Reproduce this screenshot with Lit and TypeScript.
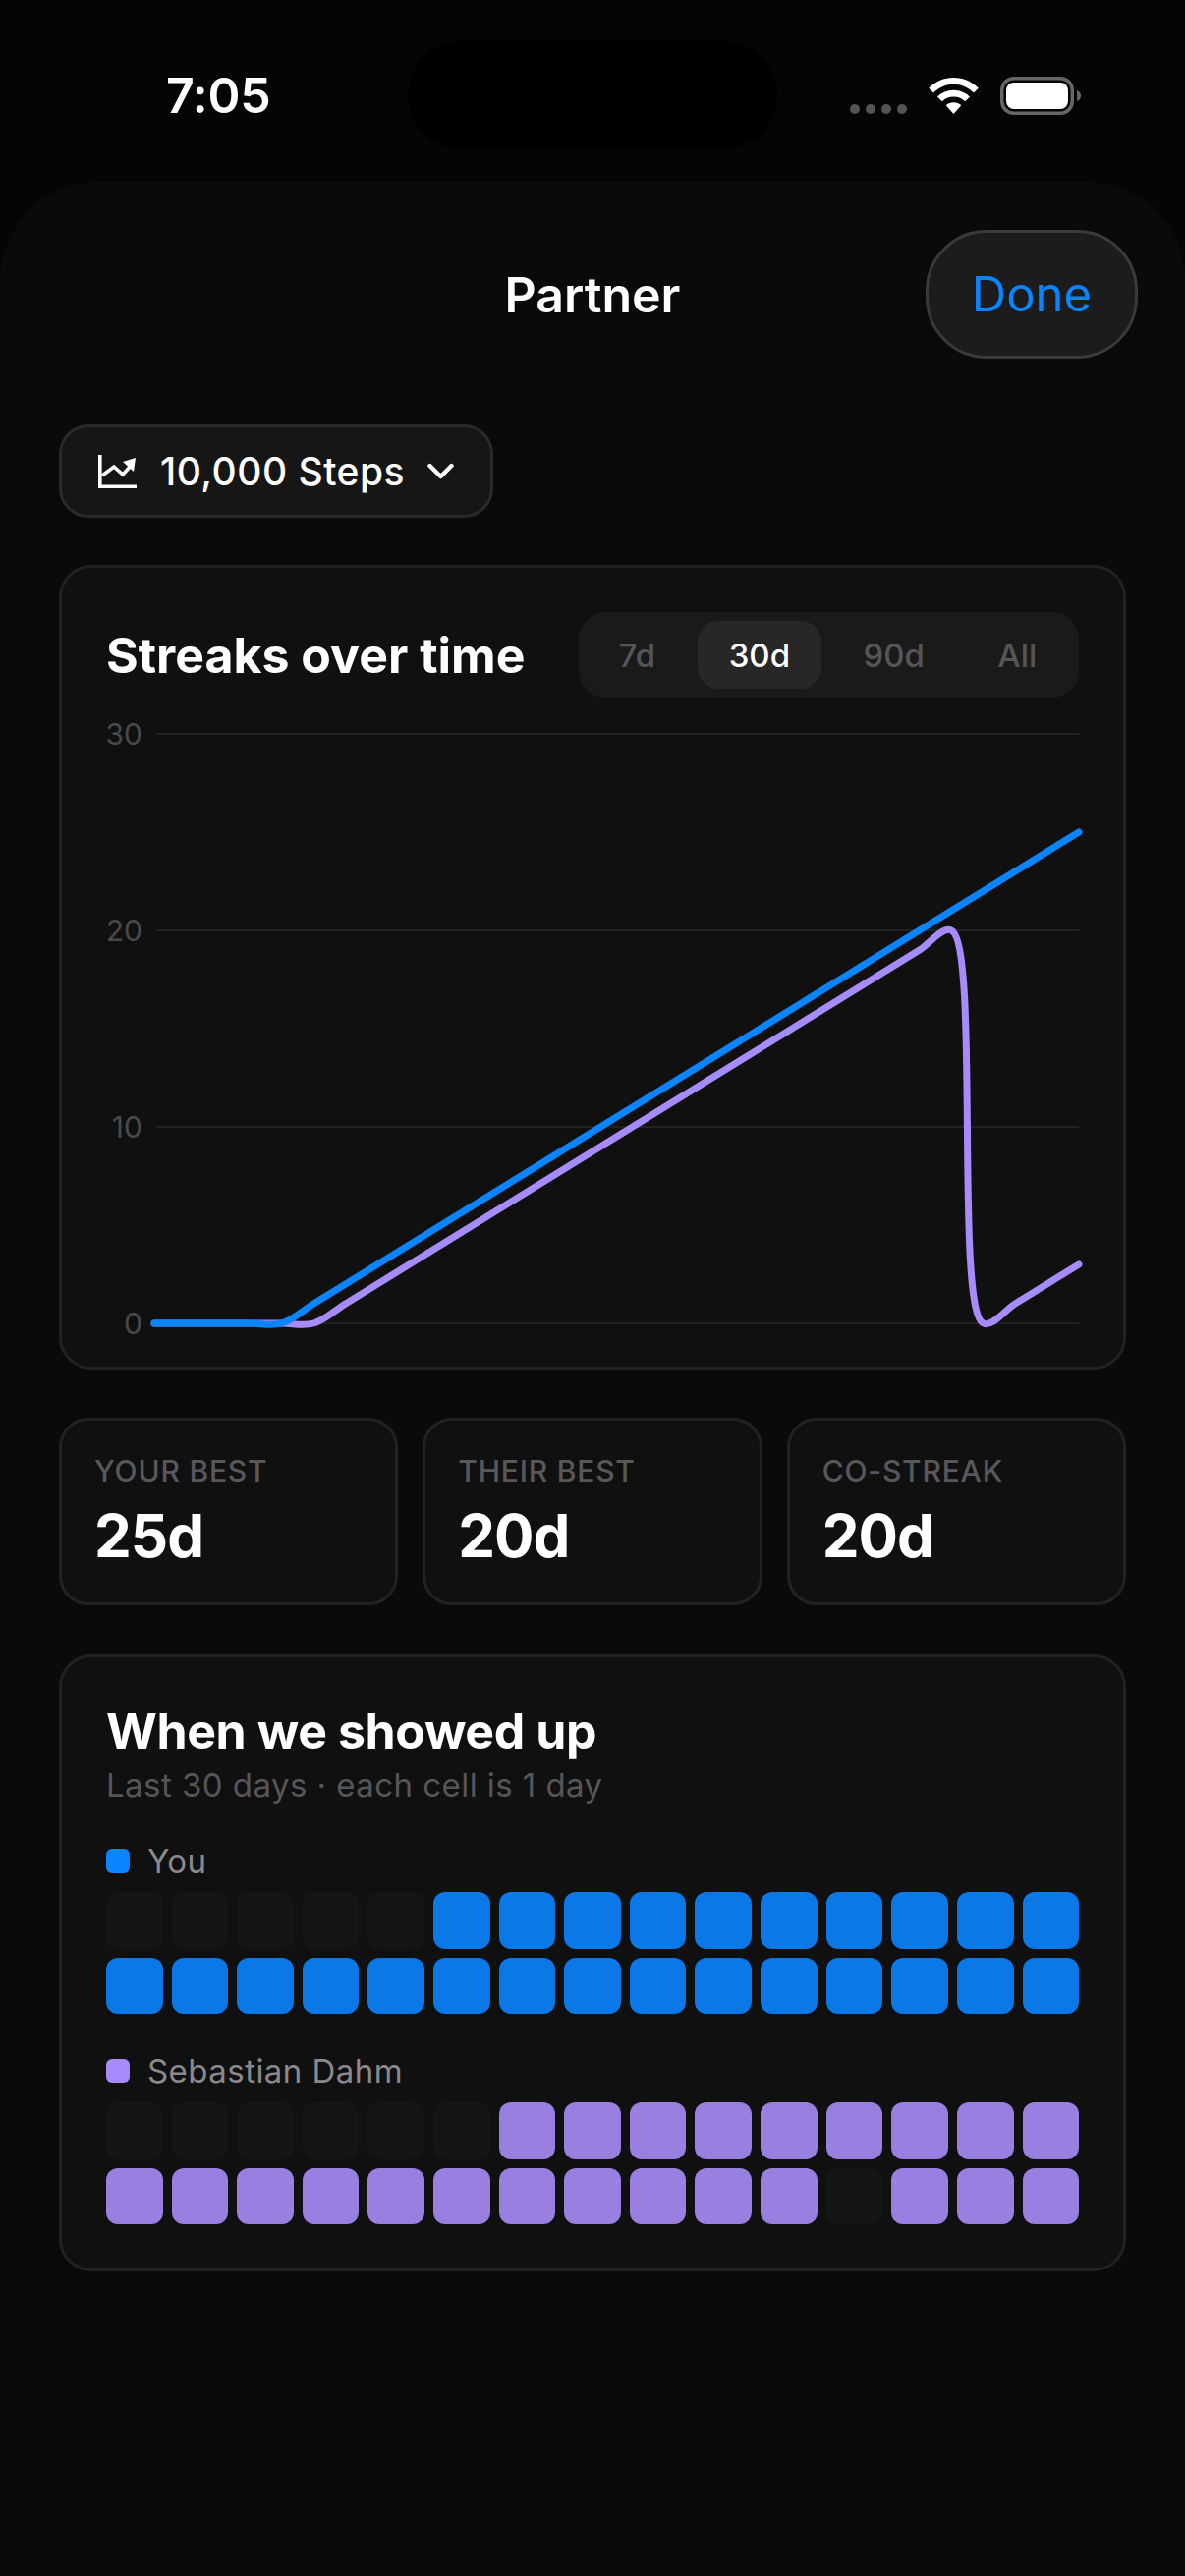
import { LitElement, html, css, svg } from "lit";
import { customElement } from "lit/decorators.js";

type Pt = [number, number];
const X0 = 49, STEP = 941 / 29, ZERO = 617, UNIT = 20;
const you = Array.from({ length: 30 }, (_, i) => Math.max(0, i - 4));
const them = Array.from({ length: 30 }, (_, i) =>
  i <= 5 ? 0 : i <= 25 ? i - 5 : i === 26 ? 0 : i - 26);

/* centripetal Catmull-Rom through the data points */
function curve(values: number[]): string {
  const p: Pt[] = values.map((v, i) => [X0 + i * STEP, ZERO - v * UNIT]);
  const dist = (a: Pt, b: Pt) => Math.hypot(a[0] - b[0], a[1] - b[1]);
  let d = `M${p[0][0]} ${p[0][1]}`;
  for (let i = 0; i < p.length - 1; i++) {
    const a = p[Math.max(i - 1, 0)], b = p[i], c = p[i + 1], e = p[Math.min(i + 2, p.length - 1)];
    const l01 = dist(a, b), l12 = dist(b, c), l23 = dist(c, e);
    const l01a = Math.sqrt(l01), l12a = Math.sqrt(l12), l23a = Math.sqrt(l23);
    let c1: Pt = [b[0], b[1]];
    let c2: Pt = [c[0], c[1]];
    if (l01a > 1e-6) {
      const A = 2 * l01 + 3 * l01a * l12a + l12, n = 3 * l01a * (l01a + l12a);
      c1 = [(b[0] * A - a[0] * l12 + c[0] * l01) / n, (b[1] * A - a[1] * l12 + c[1] * l01) / n];
    }
    if (l23a > 1e-6) {
      const B = 2 * l23 + 3 * l23a * l12a + l12, m = 3 * l23a * (l23a + l12a);
      c2 = [(c[0] * B + b[0] * l23 - e[0] * l12) / m, (c[1] * B + b[1] * l23 - e[1] * l12) / m];
    }
    d += `C${c1[0].toFixed(2)} ${c1[1].toFixed(2)} ${c2[0].toFixed(2)} ${c2[1].toFixed(2)} ${c[0].toFixed(2)} ${c[1].toFixed(2)}`;
  }
  return d;
}

@customElement("app-root")
export class AppRoot extends LitElement {
  static styles = css`
    :host { display: block; width: 1206px; height: 2622px; background: #050505; overflow: hidden;
      font-family: Inter, "Liberation Sans", sans-serif; color: #fff; }
    * { box-sizing: border-box; }
    .status { height: 185px; display: grid; grid-template-columns: 415px 376px 1fr; align-items: start; }
    .time { font-size: 50px; font-weight: 600; line-height: 60px; padding: 67px 0 0 169px; letter-spacing: -.3px; }
    .island { height: 110px; margin-top: 42px; background: #000; border-radius: 55px; }
    .sysicons { display: flex; align-items: flex-end; gap: 22px; height: 117px; padding-left: 74px; }
    .sysicons .lift { margin-bottom: 1px; }
    .sheet { height: 2437px; background: #0a0a0a; border-radius: 100px 100px 0 0; padding: 49px 60px 0; display: flex; flex-direction: column; }
    .nav { display: grid; grid-template-columns: 1fr auto 1fr; align-items: center; margin-right: -12px; height: 131px; }
    .title { grid-column: 2; font-size: 50px; font-weight: 600; position: relative; left: -6px; }
    .done { grid-column: 3; justify-self: end; width: 216px; height: 131px; border-radius: 62px; background: #1c1c1c; border: 3px solid #3a3a3a;
      color: #0a84ff; font-size: 49px; font-weight: 400; display: flex; align-items: center; justify-content: center; }
    .picker { margin-top: 67px; align-self: flex-start; width: 442px; height: 95px; border-radius: 30px; background: #161616; border: 3px solid #2a2a2a;
      display: flex; align-items: center; padding-left: 37px; font-size: 39px; font-weight: 500; letter-spacing: .5px; }
    .picker .ic { margin-right: 24px; }
    .picker .chev { margin-left: 23px; }
    .card { background: #101010; border: 3px solid #222222; border-radius: 33px; }
    .chart { margin-top: 48px; height: 819px; padding: 45px 45px 0; }
    .chart-head { display: flex; align-items: center; justify-content: space-between; height: 87px; }
    h2 { margin: 0; font-size: 50px; font-weight: 700; }
    .tabs { display: flex; gap: 11px; width: 509px; height: 87px; padding: 9px 11px 9px 9px; background: #1a1a1a; border-radius: 27px; }
    .tab { flex: 1 1 auto; padding: 0 30px; display: flex; align-items: center; justify-content: center; font-size: 33px; font-weight: 500; color: #555558; border-radius: 21px; }
    .tab.on { background: #272727; color: #fff; }
    .plot { display: block; margin-top: 20px; overflow: visible; }
    .plot text { font-size: 30px; fill: #4a4a4e; text-anchor: end; }
    .stats { margin-top: 49px; display: grid; grid-template-columns: repeat(3, 1fr); gap: 25px; }
    .stat { height: 191px; padding: 32px 33px 0; border-radius: 30px; }
    .stat .k { font-size: 30px; font-weight: 500; color: #58585c; letter-spacing: .8px; line-height: 38px; }
    .stat .v { font-size: 60px; font-weight: 700; line-height: 78px; margin-top: 8px; letter-spacing: -1px; }
    .heat { margin-top: 50px; height: 628px; padding: 46px 45px 0; }
    .heat h2 { line-height: 58px; letter-spacing: -.4px; }
    .sub { font-size: 33px; color: #56565a; line-height: 40px; letter-spacing: .45px; margin-top: 6px; }
    .legend { display: flex; align-items: center; gap: 18px; font-size: 33px; color: #8a8a8e; height: 40px; margin-top: 37px; letter-spacing: .45px; }
    .legend.two { margin-top: 38px; }
    .sw { width: 24px; height: 24px; border-radius: 6px; }
    .grid { display: grid; grid-template-columns: repeat(15, 1fr); gap: 9px; margin-top: 12px; }
    .cell { aspect-ratio: 1; border-radius: 12px; background: #151515; }
    .blue .cell.f { background: #0a78e7; }
    .purple .cell.f { background: #987fe0; }
    .sw.b { background: #0a84ff; }
    .sw.p { background: #a78bfa; }
  `;

  private cells(values: number[]) {
    return values.map((v) => html`<div class="cell ${v > 0 ? "f" : ""}"></div>`);
  }

  render() {
    return html`
      <div class="status">
        <div class="time">7:05</div>
        <div class="island"></div>
        <div class="sysicons">
          <svg class="lift" width="58" height="10" viewBox="0 0 58 10"><g fill="#555"><rect x="0" y="0" width="10" height="10" rx="5"/><rect x="16" y="0" width="10" height="10" rx="5"/><rect x="32" y="0" width="10" height="10" rx="5"/><rect x="48" y="0" width="10" height="10" rx="5"/></g></svg>
          <svg class="lift" width="51" height="37" viewBox="0 0 52 38"><g fill="#fff"><path d="M26 0C16 0 7 4 0 11l5 5C11 10 18 7 26 7s15 3 21 9l5-5C45 4 36 0 26 0Z"/><path d="M26 13c-7 0-13 3-17 7l5 5c3-3 7-5 12-5s9 2 12 5l5-5c-4-4-10-7-17-7Z"/><path d="M26 26c-3 0-6 1-8 3l8 9 8-9c-2-2-5-3-8-3Z"/></g></svg>
          <svg width="82" height="39" viewBox="0 0 82 39"><rect x="1.75" y="1.75" width="71.5" height="35.5" rx="12" fill="none" stroke="#666" stroke-width="3.5"/><rect x="6" y="6" width="63" height="27" rx="8" fill="#fff"/><path d="M78 14c3 1 4 3 4 5.5s-1 4.5-4 5.5Z" fill="#666"/></svg>
        </div>
      </div>
      <div class="sheet">
        <div class="nav">
          <div class="title">Partner</div>
          <div class="done">Done</div>
        </div>
        <div class="picker">
          <svg class="ic" width="39" height="34" viewBox="0 0 39 34" fill="none" stroke="#fff" stroke-width="3.6"><path d="M1.8 0v32.2H39"/><path d="M4 21 16 12l9 8 9-10"/><path d="M25 7 38 3l-2 14Z" fill="#fff" stroke="none"/></svg>
          <span>10,000 Steps</span>
          <svg class="chev" width="27" height="18" viewBox="0 0 27 18" fill="none" stroke="#fff" stroke-width="4.4" stroke-linecap="round" stroke-linejoin="round"><path d="M2.5 3 13.5 14 24.5 3"/></svg>
        </div>
        <div class="card chart">
          <div class="chart-head">
            <h2>Streaks over time</h2>
            <div class="tabs">
              <div class="tab">7d</div><div class="tab on">30d</div><div class="tab">90d</div><div class="tab">All</div>
            </div>
          </div>
          <svg class="plot" width="990" height="640" viewBox="0 0 990 640">
            ${[30, 20, 10, 0].map((v) => {
              const y = ZERO - v * UNIT;
              return svg`<line x1="51" x2="990" y1=${y} y2=${y} stroke="#212123" stroke-width="2"/><text x="37" y=${y + 11}>${v}</text>`;
            })}
            <path d=${curve(them)} fill="none" stroke="#a78bfa" stroke-width="7" stroke-linecap="round" stroke-linejoin="round"/>
            <path d=${curve(you)} fill="none" stroke="#0a84ff" stroke-width="7" stroke-linecap="round" stroke-linejoin="round"/>
          </svg>
        </div>
        <div class="stats">
          ${[["YOUR BEST", "25d"], ["THEIR BEST", "20d"], ["CO-STREAK", "20d"]].map(
            ([k, v]) => html`<div class="card stat"><div class="k">${k}</div><div class="v">${v}</div></div>`)}
        </div>
        <div class="card heat">
          <h2>When we showed up</h2>
          <div class="sub">Last 30 days · each cell is 1 day</div>
          <div class="legend"><span class="sw b"></span>You</div>
          <div class="grid blue">${this.cells(you)}</div>
          <div class="legend two"><span class="sw p"></span>Sebastian Dahm</div>
          <div class="grid purple">${this.cells(them)}</div>
        </div>
      </div>
    `;
  }
}
